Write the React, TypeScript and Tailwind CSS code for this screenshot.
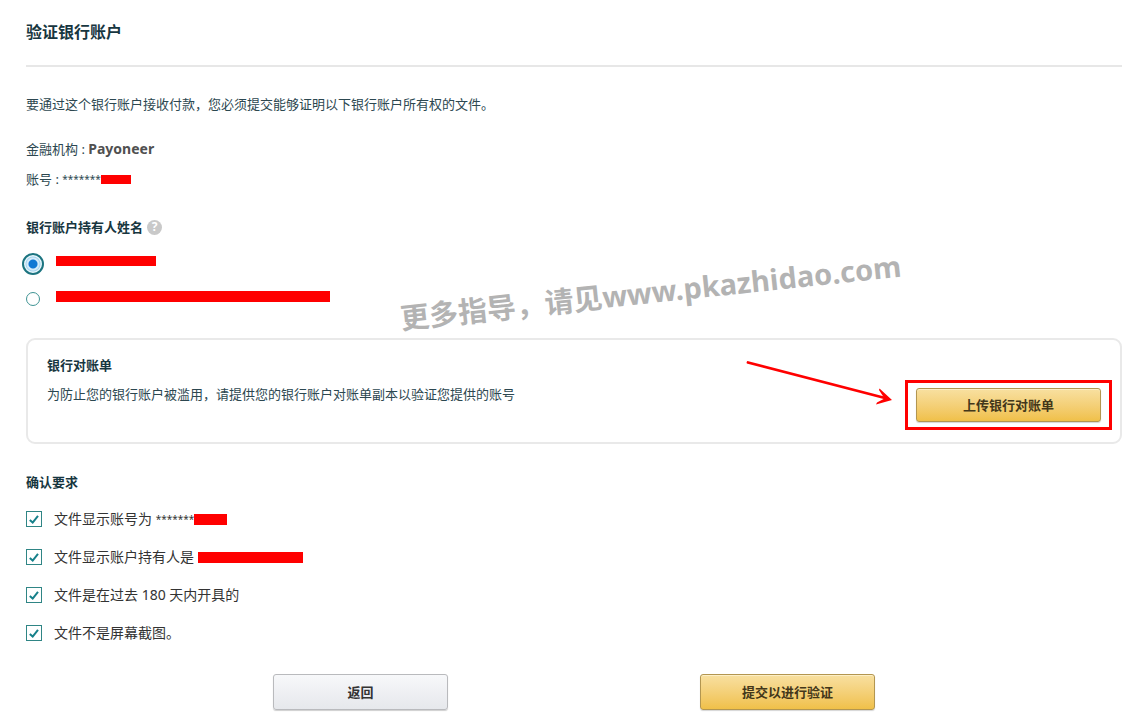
import type { ReactNode } from "react";

const gold =
  "rounded-[3px] border border-[#b39650] bg-linear-to-b from-[#f8e0a0] to-[#f0c048] text-[13px] leading-5 font-bold text-[#43371a] shadow-[inset_0_1px_0_#fdefc6,0_1px_1px_#d5d5d5]";

function Redaction({ className }: { className: string }) {
  return <span className={`block shrink-0 bg-[#ff0000] ${className}`} />;
}

function Holder({ label, checked, children }: { label: string; checked?: boolean; children: ReactNode }) {
  return (
    <label className="flex h-[22px] items-start gap-3">
      <span className="grid size-[22px] shrink-0 place-items-center">
        <input
          type="radio"
          name="holder"
          aria-label={label}
          defaultChecked={checked}
          className="size-3.5 appearance-none rounded-full border border-[#3f9494] bg-white checked:size-[22px] checked:border-2 checked:border-[#1c7480] checked:bg-[radial-gradient(circle,#0f78d4_0_4px,#d3ebfa_5px_6px,#a5d3ee_7px,#e8f7fc_8px)]"
        />
      </span>
      {children}
    </label>
  );
}

function Requirement({ children }: { children: ReactNode }) {
  return (
    <label className="flex h-5 items-center gap-3 text-[14px] leading-5 text-[#333]">
      <span className="grid size-4 shrink-0 place-items-center">
        <input
          type="checkbox"
          defaultChecked
          className="peer col-start-1 row-start-1 size-4 appearance-none border border-[#2f8585] bg-white"
        />
        <svg
          viewBox="0 0 16 16"
          className="pointer-events-none col-start-1 row-start-1 size-4 opacity-0 peer-checked:opacity-100"
          fill="none"
          stroke="#16808a"
          strokeWidth="2"
        >
          <path d="M3.8 9 L6.7 11.6 L12 4.8" />
        </svg>
      </span>
      <span className="flex items-center">{children}</span>
    </label>
  );
}

export default function App() {
  return (
    <main className="relative bg-white pt-5 pr-[9px] pb-3.5 pl-[26px] font-['Noto_Sans','Noto_Sans_CJK_SC',sans-serif] text-[13px] leading-5 text-[#2c4750]">
      <h1 className="border-b-2 border-[#e7e7e7] pb-[21px] text-[16px] leading-6 font-bold text-[#173640]">
        验证银行账户
      </h1>

      <p className="mt-[27px]">要通过这个银行账户接收付款，您必须提交能够证明以下银行账户所有权的文件。</p>
      <p className="mt-[25px] flex whitespace-pre">
        {"金融机构 : "}
        <strong className="text-[14px] font-bold text-[#505050]">Payoneer</strong>
      </p>
      <p className="mt-2.5 flex items-center whitespace-pre">
        {"账号 : "}
        <span className="text-[10px]">*******</span>
        <Redaction className="h-[9px] w-[30px]" />
      </p>

      <fieldset className="mt-7">
        <legend className="flex items-center gap-1 font-bold text-[#173640]">
          银行账户持有人姓名
          <button
            type="button"
            aria-label="帮助"
            className="grid size-[15px] place-items-center rounded-full bg-[#c9c9c9] text-[12px] leading-none font-bold text-white"
          >
            ?
          </button>
        </legend>
        <div className="mt-4 -ml-1 flex flex-col gap-[13px]">
          <Holder label="持有人 1" checked>
            <Redaction className="mt-[3px] h-2.5 w-[100px]" />
          </Holder>
          <Holder label="持有人 2">
            <Redaction className="mt-[3px] h-[11px] w-[274px]" />
          </Holder>
        </div>
      </fieldset>

      <section className="mt-7 flex items-start justify-between rounded-[9px] border-2 border-[#e9e9e9] pt-[15px] pr-2 pb-3 pl-[19px]">
        <div>
          <h2 className="font-bold text-[#173640]">银行对账单</h2>
          <p className="mt-[9px]">为防止您的银行账户被滥用，请提供您的银行账户对账单副本以验证您提供的账号</p>
        </div>
        <div className="relative mt-[25px] shrink-0 border-3 border-[#ff0000] px-2 py-[5px]">
          <svg
            viewBox="0 0 148 50"
            className="pointer-events-none absolute -top-6 right-full mr-[15px] h-[50px] w-[148px]"
            fill="#ff0000"
          >
            <path d="M3 3.5 L140 39" stroke="#ff0000" strokeWidth="2.8" strokeLinecap="round" />
            <path d="M134.5 29.5 L147 41 L131 45.5 L132 43.5 L139.5 39.5 L134 31 Z" />
          </svg>
          <button type="button" className={`h-[34px] w-[185px] ${gold}`}>
            上传银行对账单
          </button>
        </div>
      </section>

      <section className="mt-7">
        <h2 className="font-bold text-[#173640]">确认要求</h2>
        <div className="mt-[17px] flex flex-col gap-[18px]">
          <Requirement>
            <span className="whitespace-pre">文件显示账号为 </span>
            <span className="text-[10px]">*******</span>
            <Redaction className="h-[11px] w-[33px]" />
          </Requirement>
          <Requirement>
            <span className="whitespace-pre">文件显示账户持有人是 </span>
            <Redaction className="h-[11px] w-[105px]" />
          </Requirement>
          <Requirement>文件是在过去 180 天内开具的</Requirement>
          <Requirement>文件不是屏幕截图。</Requirement>
        </div>
      </section>

      <div className="mt-[31px] flex justify-center gap-[252px]">
        <button
          type="button"
          className="h-9 w-[175px] rounded-[3px] border border-[#b9babd] bg-linear-to-b from-[#f7f8fa] to-[#e6e8ec] font-bold text-[#333] shadow-[0_1px_1px_#cfcfcf]"
        >
          返回
        </button>
        <button type="button" className={`h-9 w-[175px] ${gold}`}>
          提交以进行验证
        </button>
      </div>

      <div className="pointer-events-none absolute top-[272px] left-[399px] -rotate-6 text-[29px] leading-10 font-bold whitespace-nowrap text-[#b3b3b3]">
        更多指导，请见www.pkazhidao.com
      </div>
    </main>
  );
}
